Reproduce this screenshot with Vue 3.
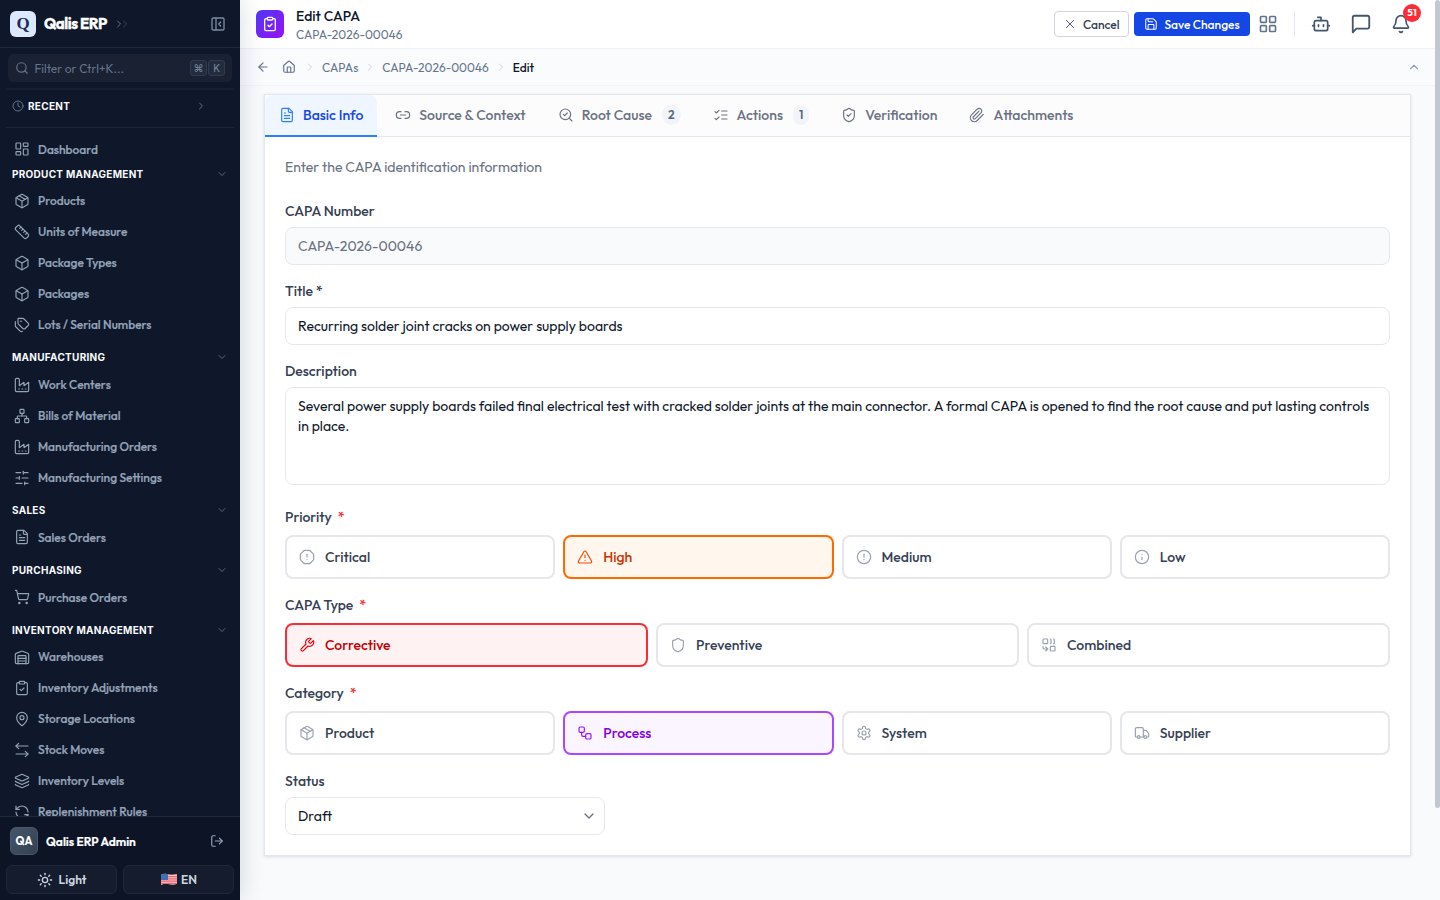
<script setup>
import { h } from 'vue'

const icons = {
  panel: '<rect width="18" height="18" x="3" y="3" rx="2"/><path d="M9 3v18"/><path d="m16 15-3-3 3-3"/>',
  search: '<circle cx="11" cy="11" r="8"/><path d="m21 21-4.3-4.3"/>',
  clock: '<circle cx="12" cy="12" r="10"/><path d="M12 6v6l4 2"/>',
  right: '<path d="m9 18 6-6-6-6"/>',
  down: '<path d="m6 9 6 6 6-6"/>',
  up: '<path d="m18 15-6-6-6 6"/>',
  dashboard: '<rect width="7" height="9" x="3" y="3" rx="1"/><rect width="7" height="5" x="14" y="3" rx="1"/><rect width="7" height="9" x="14" y="12" rx="1"/><rect width="7" height="5" x="3" y="16" rx="1"/>',
  package: '<path d="M11 21.73a2 2 0 0 0 2 0l7-4A2 2 0 0 0 21 16V8a2 2 0 0 0-1-1.73l-7-4a2 2 0 0 0-2 0l-7 4A2 2 0 0 0 3 8v8a2 2 0 0 0 1 1.73z"/><path d="M12 22V12"/><path d="m3.3 7 7.703 4.734a2 2 0 0 0 1.994 0L20.7 7"/><path d="m7.5 4.27 9 5.15"/>',
  ruler: '<path d="M21.3 15.3a2.4 2.4 0 0 1 0 3.4l-2.6 2.6a2.4 2.4 0 0 1-3.4 0L2.7 8.7a2.41 2.41 0 0 1 0-3.4l2.6-2.6a2.41 2.41 0 0 1 3.4 0Z"/><path d="m14.5 12.5 2-2"/><path d="m11.5 9.5 2-2"/><path d="m8.5 6.5 2-2"/><path d="m17.5 15.5 2-2"/>',
  box: '<path d="M21 8a2 2 0 0 0-1-1.73l-7-4a2 2 0 0 0-2 0l-7 4A2 2 0 0 0 3 8v8a2 2 0 0 0 1 1.73l7 4a2 2 0 0 0 2 0l7-4A2 2 0 0 0 21 16Z"/><path d="m3.3 7 8.7 5 8.7-5"/><path d="M12 22V12"/>',
  tags: '<path d="M13.172 2a2 2 0 0 1 1.414.586l6.71 6.71a2.4 2.4 0 0 1 0 3.408l-4.592 4.592a2.4 2.4 0 0 1-3.408 0l-6.71-6.71A2 2 0 0 1 6 9.172V3a1 1 0 0 1 1-1z"/><path d="M2 7v6.172a2 2 0 0 0 .586 1.414l6.71 6.71a2.4 2.4 0 0 0 3.191.193"/><circle cx="10.5" cy="6.5" r=".5" fill="currentColor"/>',
  factory: '<path d="M2 20a2 2 0 0 0 2 2h16a2 2 0 0 0 2-2V8l-7 5V8l-7 5V4a2 2 0 0 0-2-2H4a2 2 0 0 0-2 2Z"/><path d="M17 18h1"/><path d="M12 18h1"/><path d="M7 18h1"/>',
  network: '<rect x="16" y="16" width="6" height="6" rx="1"/><rect x="2" y="16" width="6" height="6" rx="1"/><rect x="9" y="2" width="6" height="6" rx="1"/><path d="M5 16v-3a1 1 0 0 1 1-1h12a1 1 0 0 1 1 1v3"/><path d="M12 12V8"/>',
  sliders: '<path d="M21 4h-7"/><path d="M10 4H3"/><path d="M21 12h-9"/><path d="M8 12H3"/><path d="M21 20h-5"/><path d="M12 20H3"/><path d="M14 2v4"/><path d="M8 10v4"/><path d="M16 18v4"/>',
  file: '<path d="M15 2H6a2 2 0 0 0-2 2v16a2 2 0 0 0 2 2h12a2 2 0 0 0 2-2V7Z"/><path d="M14 2v4a2 2 0 0 0 2 2h4"/><path d="M10 9H8"/><path d="M16 13H8"/><path d="M16 17H8"/>',
  cart: '<circle cx="8" cy="21" r="1"/><circle cx="19" cy="21" r="1"/><path d="M2.05 2.05h2l2.66 12.42a2 2 0 0 0 2 1.58h9.78a2 2 0 0 0 1.95-1.57l1.65-7.43H5.12"/>',
  warehouse: '<path d="M22 8.35V20a2 2 0 0 1-2 2H4a2 2 0 0 1-2-2V8.35A2 2 0 0 1 3.26 6.5l8-3.2a2 2 0 0 1 1.48 0l8 3.2A2 2 0 0 1 22 8.35Z"/><path d="M6 18h12"/><path d="M6 14h12"/><path d="M18 22V11a1 1 0 0 0-1-1H7a1 1 0 0 0-1 1v11"/>',
  clipboard: '<rect width="8" height="4" x="8" y="2" rx="1"/><path d="M16 4h2a2 2 0 0 1 2 2v14a2 2 0 0 1-2 2H6a2 2 0 0 1-2-2V6a2 2 0 0 1 2-2h2"/><path d="m9 14 2 2 4-4"/>',
  pin: '<path d="M20 10c0 4.993-5.539 10.193-7.399 11.799a1 1 0 0 1-1.202 0C9.539 20.193 4 14.993 4 10a8 8 0 0 1 16 0"/><circle cx="12" cy="10" r="3"/>',
  moves: '<path d="m7 2-4 4 4 4"/><path d="M3 6h18"/><path d="m17 14 4 4-4 4"/><path d="M21 18H3"/>',
  layers: '<path d="M12.83 2.18a2 2 0 0 0-1.66 0L2.6 6.08a1 1 0 0 0 0 1.83l8.58 3.91a2 2 0 0 0 1.66 0l8.58-3.9a1 1 0 0 0 0-1.83z"/><path d="M2 12a1 1 0 0 0 .58.91l8.6 3.91a2 2 0 0 0 1.65 0l8.58-3.9A1 1 0 0 0 22 12"/><path d="M2 17a1 1 0 0 0 .58.91l8.6 3.91a2 2 0 0 0 1.65 0l8.58-3.9A1 1 0 0 0 22 17"/>',
  refresh: '<path d="M21 12a9 9 0 0 0-9-9 9.75 9.75 0 0 0-6.74 2.74L3 8"/><path d="M3 3v5h5"/><path d="M3 12a9 9 0 0 0 9 9 9.75 9.75 0 0 0 6.74-2.74L21 16"/><path d="M16 16h5v5"/>',
  logout: '<path d="m16 17 5-5-5-5"/><path d="M21 12H9"/><path d="M9 21H5a2 2 0 0 1-2-2V5a2 2 0 0 1 2-2h4"/>',
  sun: '<circle cx="12" cy="12" r="4"/><path d="M12 2v2"/><path d="M12 20v2"/><path d="m4.93 4.93 1.41 1.41"/><path d="m17.66 17.66 1.41 1.41"/><path d="M2 12h2"/><path d="M20 12h2"/><path d="m6.34 17.66-1.41 1.41"/><path d="m19.07 4.93-1.41 1.41"/>',
  x: '<path d="M18 6 6 18"/><path d="m6 6 12 12"/>',
  save: '<path d="M15.2 3a2 2 0 0 1 1.4.6l3.8 3.8a2 2 0 0 1 .6 1.4V19a2 2 0 0 1-2 2H5a2 2 0 0 1-2-2V5a2 2 0 0 1 2-2z"/><path d="M17 21v-7a1 1 0 0 0-1-1H8a1 1 0 0 0-1 1v7"/><path d="M7 3v4a1 1 0 0 0 1 1h7"/>',
  grid: '<rect width="7" height="7" x="3" y="3" rx="1"/><rect width="7" height="7" x="14" y="3" rx="1"/><rect width="7" height="7" x="14" y="14" rx="1"/><rect width="7" height="7" x="3" y="14" rx="1"/>',
  bot: '<path d="M12 8V4H8"/><rect width="16" height="12" x="4" y="8" rx="2"/><path d="M2 14h2"/><path d="M20 14h2"/><path d="M15 13v2"/><path d="M9 13v2"/>',
  chat: '<path d="M21 15a2 2 0 0 1-2 2H7l-4 4V5a2 2 0 0 1 2-2h14a2 2 0 0 1 2 2z"/>',
  bell: '<path d="M10.268 21a2 2 0 0 0 3.464 0"/><path d="M3.262 15.326A1 1 0 0 0 4 17h16a1 1 0 0 0 .74-1.673C19.41 13.956 18 12.499 18 8A6 6 0 0 0 6 8c0 4.499-1.411 5.956-2.738 7.326"/>',
  back: '<path d="m12 19-7-7 7-7"/><path d="M19 12H5"/>',
  home: '<path d="M15 21v-8a1 1 0 0 0-1-1h-4a1 1 0 0 0-1 1v8"/><path d="M3 10a2 2 0 0 1 .709-1.528l7-6a2 2 0 0 1 2.582 0l7 6A2 2 0 0 1 21 10v9a2 2 0 0 1-2 2H5a2 2 0 0 1-2-2z"/>',
  link: '<path d="M9 17H7A5 5 0 0 1 7 7h2"/><path d="M15 7h2a5 5 0 1 1 0 10h-2"/><path d="M8 12h8"/>',
  searchCheck: '<path d="m8 11 2 2 4-4"/><circle cx="11" cy="11" r="8"/><path d="m21 21-4.3-4.3"/>',
  listChecks: '<path d="m3 17 2 2 4-4"/><path d="m3 7 2 2 4-4"/><path d="M13 6h8"/><path d="M13 12h8"/><path d="M13 18h8"/>',
  shieldCheck: '<path d="M20 13c0 5-3.5 7.5-7.66 8.95a1 1 0 0 1-.67-.01C7.5 20.5 4 18 4 13V6a1 1 0 0 1 1-1c2 0 4.5-1.2 6.24-2.72a1.17 1.17 0 0 1 1.52 0C14.51 3.81 17 5 19 5a1 1 0 0 1 1 1z"/><path d="m9 12 2 2 4-4"/>',
  shield: '<path d="M20 13c0 5-3.5 7.5-7.66 8.95a1 1 0 0 1-.67-.01C7.5 20.5 4 18 4 13V6a1 1 0 0 1 1-1c2 0 4.5-1.2 6.24-2.72a1.17 1.17 0 0 1 1.52 0C14.51 3.81 17 5 19 5a1 1 0 0 1 1 1z"/>',
  clip: '<path d="m21.44 11.05-9.19 9.19a6 6 0 0 1-8.49-8.49l8.57-8.57A4 4 0 1 1 18 8.84l-8.59 8.57a2 2 0 0 1-2.83-2.83l8.49-8.48"/>',
  octagon: '<path d="M12 16h.01"/><path d="M12 8v4"/><path d="M15.312 2a2 2 0 0 1 1.414.586l4.688 4.688A2 2 0 0 1 22 8.688v6.624a2 2 0 0 1-.586 1.414l-4.688 4.688a2 2 0 0 1-1.414.586H8.688a2 2 0 0 1-1.414-.586l-4.688-4.688A2 2 0 0 1 2 15.312V8.688a2 2 0 0 1 .586-1.414l4.688-4.688A2 2 0 0 1 8.688 2z"/>',
  triangle: '<path d="m21.73 18-8-14a2 2 0 0 0-3.48 0l-8 14A2 2 0 0 0 4 21h16a2 2 0 0 0 1.73-3"/><path d="M12 9v4"/><path d="M12 17h.01"/>',
  alert: '<circle cx="12" cy="12" r="10"/><path d="M12 8v4"/><path d="M12 16h.01"/>',
  info: '<circle cx="12" cy="12" r="10"/><path d="M12 16v-4"/><path d="M12 8h.01"/>',
  wrench: '<path d="M14.7 6.3a1 1 0 0 0 0 1.4l1.6 1.6a1 1 0 0 0 1.4 0l3.77-3.77a6 6 0 0 1-7.94 7.94l-6.91 6.91a2.12 2.12 0 0 1-3-3l6.91-6.91a6 6 0 0 1 7.94-7.94l-3.76 3.76z"/>',
  combine: '<path d="M14 3a1 1 0 0 1 1 1v5a1 1 0 0 1-1 1"/><path d="M19 3a1 1 0 0 1 1 1v5a1 1 0 0 1-1 1"/><path d="m7 15 3 3"/><path d="m7 21 3-3H5a2 2 0 0 1-2-2v-2"/><rect x="14" y="14" width="7" height="7" rx="1"/><rect x="3" y="3" width="7" height="7" rx="1"/>',
  workflow: '<rect width="8" height="8" x="3" y="3" rx="2"/><path d="M7 11v4a2 2 0 0 0 2 2h4"/><rect width="8" height="8" x="13" y="13" rx="2"/>',
  gear: '<path d="M12.22 2h-.44a2 2 0 0 0-2 2v.18a2 2 0 0 1-1 1.73l-.43.25a2 2 0 0 1-2 0l-.15-.08a2 2 0 0 0-2.73.73l-.22.38a2 2 0 0 0 .73 2.73l.15.1a2 2 0 0 1 1 1.72v.51a2 2 0 0 1-1 1.74l-.15.09a2 2 0 0 0-.73 2.73l.22.38a2 2 0 0 0 2.73.73l.15-.08a2 2 0 0 1 2 0l.43.25a2 2 0 0 1 1 1.73V20a2 2 0 0 0 2 2h.44a2 2 0 0 0 2-2v-.18a2 2 0 0 1 1-1.73l.43-.25a2 2 0 0 1 2 0l.15.08a2 2 0 0 0 2.73-.73l.22-.39a2 2 0 0 0-.73-2.73l-.15-.08a2 2 0 0 1-1-1.74v-.5a2 2 0 0 1 1-1.74l.15-.09a2 2 0 0 0 .73-2.73l-.22-.38a2 2 0 0 0-2.73-.73l-.15.08a2 2 0 0 1-2 0l-.43-.25a2 2 0 0 1-1-1.73V4a2 2 0 0 0-2-2z"/><circle cx="12" cy="12" r="3"/>',
  truck: '<path d="M14 18V6a2 2 0 0 0-2-2H4a2 2 0 0 0-2 2v11a1 1 0 0 0 1 1h2"/><path d="M15 18H9"/><path d="M19 18h2a1 1 0 0 0 1-1v-3.65a1 1 0 0 0-.22-.624l-3.48-4.35A1 1 0 0 0 17.52 8H14"/><circle cx="17" cy="18" r="2"/><circle cx="7" cy="18" r="2"/>',
}

const Icon = (props) =>
  h('svg', {
    width: props.size || 16,
    height: props.size || 16,
    viewBox: '0 0 24 24',
    fill: 'none',
    stroke: 'currentColor',
    'stroke-width': 2,
    'stroke-linecap': 'round',
    'stroke-linejoin': 'round',
    innerHTML: icons[props.name],
  })
Icon.props = ['name', 'size']

const sections = [
  { title: 'PRODUCT MANAGEMENT', items: [
    { icon: 'package', label: 'Products' },
    { icon: 'ruler', label: 'Units of Measure' },
    { icon: 'box', label: 'Package Types' },
    { icon: 'box', label: 'Packages' },
    { icon: 'tags', label: 'Lots / Serial Numbers' },
  ] },
  { title: 'MANUFACTURING', items: [
    { icon: 'factory', label: 'Work Centers' },
    { icon: 'network', label: 'Bills of Material' },
    { icon: 'factory', label: 'Manufacturing Orders' },
    { icon: 'sliders', label: 'Manufacturing Settings' },
  ] },
  { title: 'SALES', items: [{ icon: 'file', label: 'Sales Orders' }] },
  { title: 'PURCHASING', items: [{ icon: 'cart', label: 'Purchase Orders' }] },
  { title: 'INVENTORY MANAGEMENT', items: [
    { icon: 'warehouse', label: 'Warehouses' },
    { icon: 'clipboard', label: 'Inventory Adjustments' },
    { icon: 'pin', label: 'Storage Locations' },
    { icon: 'moves', label: 'Stock Moves' },
    { icon: 'layers', label: 'Inventory Levels' },
    { icon: 'refresh', label: 'Replenishment Rules' },
  ] },
]

const tabs = [
  { icon: 'file', label: 'Basic Info', active: true },
  { icon: 'link', label: 'Source & Context' },
  { icon: 'searchCheck', label: 'Root Cause', count: 2 },
  { icon: 'listChecks', label: 'Actions', count: 1 },
  { icon: 'shieldCheck', label: 'Verification' },
  { icon: 'clip', label: 'Attachments' },
]

const groups = [
  { label: 'Priority', cols: 'four', options: [
    { icon: 'octagon', label: 'Critical' },
    { icon: 'triangle', label: 'High', tone: 'orange' },
    { icon: 'alert', label: 'Medium' },
    { icon: 'info', label: 'Low' },
  ] },
  { label: 'CAPA Type', cols: 'three', options: [
    { icon: 'wrench', label: 'Corrective', tone: 'red' },
    { icon: 'shield', label: 'Preventive' },
    { icon: 'combine', label: 'Combined' },
  ] },
  { label: 'Category', cols: 'four', options: [
    { icon: 'package', label: 'Product' },
    { icon: 'workflow', label: 'Process', tone: 'purple' },
    { icon: 'gear', label: 'System' },
    { icon: 'truck', label: 'Supplier' },
  ] },
]
</script>

<template>
  <div class="app">
    <aside class="sidebar">
      <div class="brand">
        <span class="logo">Q</span>
        <span class="brand-name">Qalis ERP</span>
        <span class="brand-arrows"><Icon name="right" size="12" /><Icon name="right" size="12" /></span>
        <Icon name="panel" size="16" class="collapse" />
      </div>
      <div class="search">
        <Icon name="search" size="14" />
        <span>Filter or Ctrl+K...</span>
        <kbd>⌘</kbd><kbd>K</kbd>
      </div>
      <div class="recent">
        <Icon name="clock" size="12" />
        <span class="caps">RECENT</span>
        <Icon name="right" size="12" class="recent-arrow" />
      </div>
      <nav>
        <a class="item"><Icon name="dashboard" /><span>Dashboard</span></a>
        <section v-for="s in sections" :key="s.title">
          <div class="section-head">
            <span class="caps">{{ s.title }}</span>
            <Icon name="down" size="12" />
          </div>
          <a v-for="i in s.items" :key="i.label" class="item">
            <Icon :name="i.icon" /><span>{{ i.label }}</span>
          </a>
        </section>
      </nav>
      <div class="foot">
        <div class="user">
          <span class="avatar">QA</span>
          <span class="user-name">Qalis ERP Admin</span>
          <Icon name="logout" size="14" class="logout" />
        </div>
        <div class="foot-buttons">
          <button><Icon name="sun" size="16" /><span>Light</span></button>
          <button class="lang">
            <svg class="flag" width="18" height="13" viewBox="0 0 18 13">
              <defs>
                <clipPath id="wave"><path d="M1 1.6C4 .4 6 .8 9 1.4s5 .6 8-.6v10C14 12 12 11.800 9 11.200S4 10.800 1 12z" /></clipPath>
              </defs>
              <g clip-path="url(#wave)">
                <rect width="18" height="13" fill="#f0c9cd" />
                <path d="M0 1.500h18M0 3.700h18M0 5.900h18M0 8.100h18M0 10.300h18M0 12.300h18" stroke="#e8666f" stroke-width="1.200" />
                <rect width="8" height="7" fill="#3f6fb5" />
              </g>
            </svg>
            <span>EN</span>
          </button>
        </div>
      </div>
    </aside>

    <main>
      <header class="topbar">
        <span class="page-icon"><Icon name="clipboard" size="16" /></span>
        <div class="page-title">
          <h1>Edit CAPA</h1>
          <p>CAPA-2026-00046</p>
        </div>
        <div class="actions">
          <button class="cancel"><Icon name="x" size="14" /><span>Cancel</span></button>
          <button class="save"><Icon name="save" size="14" /><span>Save Changes</span></button>
          <Icon name="grid" size="20" class="apps" />
          <i class="rule"></i>
          <Icon name="bot" size="20" class="tool" />
          <Icon name="chat" size="22" class="tool chat" />
          <span class="bell"><Icon name="bell" size="20" class="tool" /><b>51</b></span>
        </div>
      </header>
      <div class="crumbs">
        <Icon name="back" size="14" />
        <Icon name="home" size="14" class="home" />
        <Icon name="right" size="12" class="sep" />
        <span>CAPAs</span>
        <Icon name="right" size="12" class="sep" />
        <span>CAPA-2026-00046</span>
        <Icon name="right" size="12" class="sep" />
        <span class="current">Edit</span>
        <Icon name="up" size="14" class="fold" />
      </div>

      <div class="card">
        <div class="tabs">
          <div v-for="t in tabs" :key="t.label" class="tab" :class="{ active: t.active }">
            <Icon :name="t.icon" /><span>{{ t.label }}</span>
            <em v-if="t.count">{{ t.count }}</em>
          </div>
        </div>
        <div class="form">
          <p class="hint">Enter the CAPA identification information</p>
          <div class="field">
            <label>CAPA Number</label>
            <div class="input disabled">CAPA-2026-00046</div>
          </div>
          <div class="field">
            <label>Title *</label>
            <div class="input">Recurring solder joint cracks on power supply boards</div>
          </div>
          <div class="field last">
            <label>Description</label>
            <div class="input area">Several power supply boards failed final electrical test with cracked solder joints at the main connector. A formal CAPA is opened to find the root cause and put lasting controls in place.</div>
          </div>
          <div v-for="g in groups" :key="g.label" class="group">
            <label>{{ g.label }}<i class="req">*</i></label>
            <div class="options" :class="g.cols">
              <div v-for="o in g.options" :key="o.label" class="option" :class="o.tone">
                <Icon :name="o.icon" /><span>{{ o.label }}</span>
              </div>
            </div>
          </div>
          <div class="field status">
            <label>Status</label>
            <div class="input select"><span>Draft</span><Icon name="down" size="16" /></div>
          </div>
        </div>
      </div>
      <i class="scrollbar"></i>
    </main>
  </div>
</template>

<style>
body { overflow: hidden; }
</style>

<style scoped>
* { box-sizing: border-box; margin: 0; }
.app {
  display: flex; width: 1440px; height: 900px; overflow: hidden;
  font-family: Outfit, Lato, sans-serif; font-size: 14px; color: #0f172a; background: #f8fafc;
}
svg { flex: none; display: block; }
span { white-space: nowrap; }
button { font: inherit; display: flex; align-items: center; }

.sidebar {
  position: relative; z-index: 1; flex: none; width: 240px; height: 900px;
  display: flex; flex-direction: column; background: #0f172a; color: #94a3b8;
  box-shadow: 0 0 24px rgba(15, 23, 42, .16);
}
.brand { height: 48px; flex: none; display: flex; align-items: center; padding: 0 14px 0 10px; border-bottom: 1px solid #1e293b; }
.logo {
  width: 26px; height: 26px; border-radius: 6px; background: #dbe8fe; color: #1e2a5a;
  font: bold 17px/26px "Liberation Serif", serif; text-align: center;
}
.brand-name { margin-left: 8px; font-size: 15px; font-weight: 700; letter-spacing: -.45px; color: #fff; -webkit-text-stroke: .3px #fff; }
.brand-arrows { display: flex; margin-left: 6.5px; color: #64748b; }
.brand-arrows svg + svg { margin-left: -6px; opacity: .5; }
.collapse { margin-left: auto; color: #7b8aa1; }
.search {
  height: 28px; flex: none; margin: 6px 8px 0; padding: 0 7px; border-radius: 5px; background: #192133;
  display: flex; align-items: center; color: #64748b; font-size: 12px;
}
.search span { margin-left: 5.500px; margin-right: auto; }
kbd {
  width: 17px; height: 16px; border: 1px solid #323c4e; border-radius: 3px; background: #232c3e;
  color: #7c8aa0; font: 10px/14px Inter, "DejaVu Sans", sans-serif; text-align: center;
}
kbd + kbd { margin-left: 1px; }
.recent {
  height: 40px; flex: none; margin: 6px 6px 0; padding: 0 27px 5px 6px; display: flex; align-items: center;
  border-top: 2px solid #162034; border-bottom: 1px solid #1a2438; color: #64748b;
}
.recent .caps { margin-left: 4px; }
.recent-arrow { margin-left: auto; }
.caps { font: 700 10px/18px Inter, sans-serif; letter-spacing: .28px; color: #f8fafc; }
nav { flex: 1; overflow: hidden; padding-top: 5.5px; }
.item { display: flex; align-items: center; height: 31px; padding-left: 14px; font-size: 12px; font-weight: 500; }
.item span { margin-left: 8px; -webkit-text-stroke: .2px #94a3b8; }
.item svg, .section-head svg { stroke-width: 1.75; }
.section-head { display: flex; justify-content: space-between; align-items: center; height: 18px; margin: 8px 12px 2.8px; color: #64748b; }
.item + section .section-head { margin-top: 0; }
.foot { flex: none; height: 84px; background: #0d1426; border-top: 1px solid #1e293b; }
.user { display: flex; align-items: center; height: 48px; padding: 0 16px 0 10px; }
.avatar {
  width: 28px; height: 28px; border-radius: 6px; background: linear-gradient(135deg, #475569, #334155); border: 1px solid #4b586b;
  color: #fff; font-size: 11px; font-weight: 700; line-height: 26px; text-align: center;
}
.user-name { margin-left: 8px; color: #fff; font-weight: 600; font-size: 12px; -webkit-text-stroke: .2px #fff; }
.logout { margin-left: auto; }
.foot-buttons { display: flex; gap: 6px; padding: 0 6px; }
.foot-buttons button {
  flex: 1; height: 29px; justify-content: center; gap: 6px; padding: 0; border: 1px solid #1f2839; border-radius: 6px;
  background: #151c2d; color: #cbd5e1; font-weight: 600; font-size: 12px;
}
.foot-buttons .lang { gap: 3px; }

main { position: relative; flex: 1; min-width: 0; }
.topbar { height: 49px; background: #fff; border-bottom: 1px solid #eef1f5; display: flex; align-items: center; padding: 0 29px 0 16px; }
.page-icon {
  width: 28px; height: 28px; border-radius: 6px; color: #fff; display: flex; align-items: center; justify-content: center;
  background: linear-gradient(135deg, #4f39f6, #9810fa);
}
.page-title { margin-left: 12px; padding-top: 3px; }
h1 { font-size: 14px; line-height: 18px; font-weight: 500; }
.page-title p { font-size: 12px; line-height: 19px; color: #64748b; }
.actions { margin-left: auto; display: flex; align-items: center; }
.cancel, .save { font-size: 12px; font-weight: 500; padding: 0; border-radius: 4px; }
.cancel { width: 75px; height: 26px; background: #fff; border: 1px solid #d1d5dc; color: #364153; padding-left: 8px; gap: 6.5px; }
.cancel svg { stroke-width: 1.5; }
.save { width: 116px; height: 24px; margin-left: 5.500px; background: #1447e6; border: 0; color: #fff; padding-left: 10px; gap: 6.500px; }
.save svg { stroke-width: 1.75; }
.apps { margin-left: 8px; color: #64748b; }
.rule { width: 1px; height: 24px; background: #e2e8f0; margin: 0 16px 0 16px; }
.tool { color: #45556c; }
.chat { margin: 0 19px; }
.bell { position: relative; }
.bell b {
  position: absolute; left: 12px; top: -10px; width: 18px; height: 18px; border-radius: 9px; background: #fb2c36; color: #fff;
  font-size: 10px; line-height: 18px; text-align: center;
}
.crumbs {
  height: 37px; border-bottom: 1px solid #f1f4f8; background: #fafbfd; display: flex; align-items: center;
  padding: 0 19px 0 16px; font-size: 12px; color: #64748b;
}
.crumbs .home { margin-left: 12px; }
.crumbs .sep { margin: 0 6px; color: #cbd5e1; }
.crumbs .home + .sep { margin-left: 8px; }
.crumbs .current { color: #0f172a; font-weight: 500; }
.crumbs .fold { margin-left: auto; color: #90a1b9; }

.card { margin: 8px 29px 0 24px; height: 762px; background: #fff; border: 1px solid #e2e8f0; box-shadow: 0 1px 3px rgba(15, 23, 42, .12); }
.tabs { display: flex; gap: 4px; height: 42px; background: #fcfcfd; border-bottom: 1px solid #e2e8f0; }
.tab { height: 42px; padding: 0 14px 2px; display: flex; align-items: center; font-weight: 500; color: #6a7282; }
.tab svg { margin-right: 8px; stroke-width: 1.75; }
.tab em {
  margin-left: 10px; padding: 0 6px; border-radius: 10px; background: #f1f5f9; color: #5b6679;
  font-style: normal; font-size: 12px; line-height: 20px; font-weight: 600;
}
.active { background: #eff6ff; color: #1447e6; border-bottom: 2px solid #2b7fff; border-radius: 8px 8px 0 0; padding-bottom: 0; }
.active svg { color: #2b7fff; }
.form { padding: 20px; }
.hint { line-height: 20px; color: #6a7282; margin-bottom: 24px; }
label { display: flex; line-height: 20px; margin-bottom: 6px; font-weight: 500; color: #364153; }
.field { margin-bottom: 16px; }
.field.last { margin-bottom: 22px; }
.input { height: 38px; line-height: 20px; padding: 8px 12px; border: 1px solid #e5e7eb; border-radius: 8px; background: #fff; }
.disabled { background: #f9fafb; color: #6a7282; }
.area { height: 98px; }
.group { margin-bottom: 16px; }
.group label { margin-bottom: 8px; }
.req { color: #fb2c36; font-style: normal; margin-left: 6px; }
.options { display: grid; gap: 8px; }
.four { grid-template-columns: repeat(4, 1fr); }
.three { grid-template-columns: repeat(3, 1fr); }
.option { height: 44px; display: flex; align-items: center; gap: 10px; padding-left: 12px; border: 2px solid #e5e7eb; border-radius: 8px; font-weight: 500; color: #364153; }
.option svg { color: #99a1af; stroke-width: 1.75; }
.option.orange { border-color: #ff6900; background: #fff7ed; color: #ca3500; }
.orange svg { color: #f54900; }
.option.red { border-color: #fb2c36; background: #fef2f2; color: #c10007; }
.red svg { color: #e7000b; }
.option.purple { border-color: #ad46ff; background: #faf5ff; color: #8200db; }
.purple svg { color: #9810fa; }
.select { width: 320px; display: flex; justify-content: space-between; align-items: center; padding-right: 7px; }
.select svg { color: #6a7282; }
.scrollbar { position: absolute; right: 0; top: 0; width: 5px; height: 808px; border-radius: 3px; background: #c1c8d1; }
</style>
